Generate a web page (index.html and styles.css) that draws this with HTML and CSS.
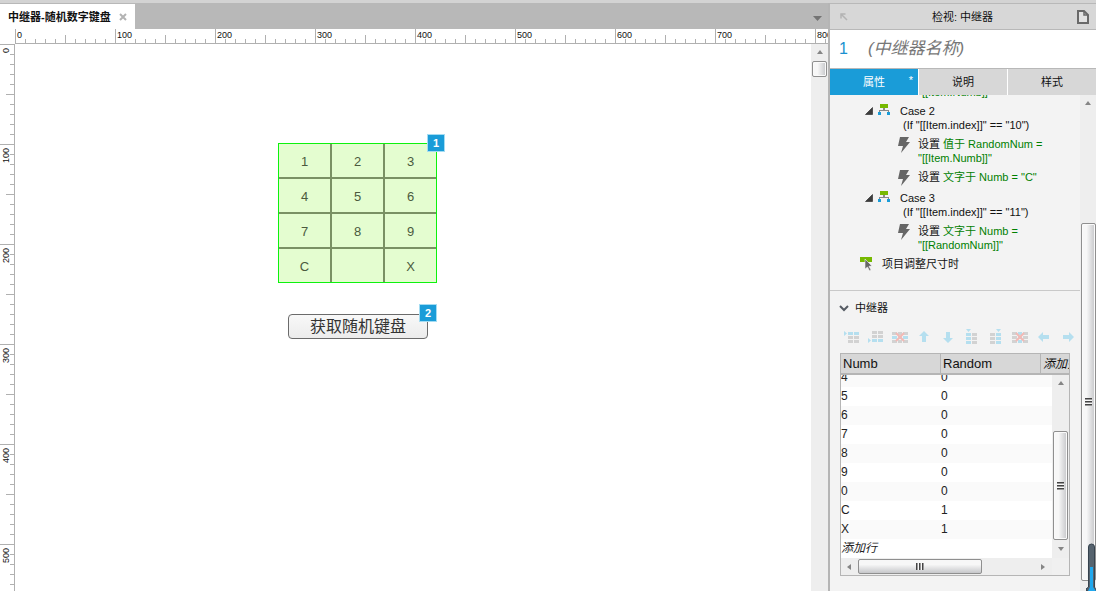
FILE: index.html
```html
<!DOCTYPE html>
<html lang="zh-CN">
<head>
<meta charset="utf-8">
<title>中继器-随机数字键盘</title>
<link rel="stylesheet" href="styles.css">
</head>
<body>
<svg class="defs" aria-hidden="true">
  <symbol id="case" viewBox="0 0 12 12"><path fill="#76b900" d="M2 0h8v4H2z"/><path fill="#8a8a8a" d="M5 4h2v2h4v2h-1V7H2v1H1V6h4z"/><path fill="#1a9cd8" d="M0 8h3v3H0zM9 8h3v3H9z"/></symbol>
  <symbol id="bolt" viewBox="0 0 12 16"><path fill="#666" d="M2 0h9L8 5h4L3 16l2-7H0z"/></symbol>
  <symbol id="open" viewBox="0 0 8 8"><path fill="#3c3c3c" stroke="#222" stroke-width=".6" d="M7.5.5v7h-7z"/></symbol>
  <symbol id="up" viewBox="0 0 6 4"><path fill="#858585" d="M3 0l3 4H0z"/></symbol>
  <symbol id="down" viewBox="0 0 6 4"><path fill="#858585" d="M0 0h6L3 4z"/></symbol>
  <symbol id="left" viewBox="0 0 4 6"><path fill="#858585" d="M4 0v6L0 3z"/></symbol>
  <symbol id="right" viewBox="0 0 4 6"><path fill="#858585" d="M0 0l4 3-4 3z"/></symbol>
  <symbol id="arrow" viewBox="0 0 16 16"><path fill="#b5dfef" d="M8 2l5 5h-3v6H6V7H3z"/></symbol>
</svg>
<div class="app">
  <main class="editor">
    <div class="tabbar">
      <div class="doc-tab"><span>中继器-随机数字键盘</span>
        <button class="plain" aria-label="关闭"><svg width="8" height="8" viewBox="0 0 8 8"><path d="M1 1l6 6M7 1L1 7" stroke="#b3b3b3" stroke-width="2"/></svg></button>
      </div>
      <button class="plain tab-menu" aria-label="页面列表"><svg width="9" height="5" viewBox="0 0 9 5"><path d="M0 0h9L4.500 5z" fill="#747474"/></svg></button>
    </div>
    <div class="ruler-x"><span>0</span><span>100</span><span>200</span><span>300</span><span>400</span><span>500</span><span>600</span><span>700</span><span>800</span></div>
    <div class="work">
      <div class="ruler-y"><div><span>0</span></div><div><span>100</span></div><div><span>200</span></div><div><span>300</span></div><div><span>400</span></div><div><span>500</span></div></div>
      <div class="canvas">
        <div class="keypad"><div>1</div><div>2</div><div>3</div><div>4</div><div>5</div><div>6</div><div>7</div><div>8</div><div>9</div><div>C</div><div></div><div>X</div><b class="badge">1</b></div>
        <div class="shuffle"><button>获取随机键盘</button><b class="badge">2</b></div>
      </div>
      <div class="scroll canvas-scroll"><svg width="6" height="4"><use href="#up"/></svg><i class="thumb"></i></div>
    </div>
  </main>
  <aside class="inspector">
    <header class="head">
      <svg width="8" height="8" viewBox="0 0 8 8"><path d="M1 5.500V1h4.500M1.500 1.500L7 7" fill="none" stroke="#b3b3b3" stroke-width="1.500"/></svg>
      <h1>检视: 中继器</h1>
      <svg width="12" height="14" viewBox="0 0 12 14"><path d="M1 1h6l4 4v8H1z" fill="#e2e2e2" stroke="#696969" stroke-width="2"/><path d="M7 1v4h4" fill="none" stroke="#696969" stroke-width="1.500"/></svg>
    </header>
    <div class="name"><label for="nm">1</label><input id="nm" placeholder="(中继器名称)"></div>
    <nav class="tabs"><button class="on">属性<sup>*</sup></button><button>说明</button><button>样式</button></nav>
    <div class="body">
      <div class="content">
        <section class="events">
          <p class="action clipped">"[[Item.Numb]]"</p>
          <div class="case"><svg class="tri" width="8" height="8"><use href="#open"/></svg><svg class="ci" width="12" height="12"><use href="#case"/></svg><p>Case 2<span>(If "[[Item.index]]" == "10")</span></p></div>
          <div class="action"><svg width="12" height="16"><use href="#bolt"/></svg><p><b>设置</b> 值于 RandomNum =<br>"[[Item.Numb]]"</p></div>
          <div class="action"><svg width="12" height="16"><use href="#bolt"/></svg><p><b>设置</b> 文字于 Numb = "C"</p></div>
          <div class="case"><svg class="tri" width="8" height="8"><use href="#open"/></svg><svg class="ci" width="12" height="12"><use href="#case"/></svg><p>Case 3<span>(If "[[Item.index]]" == "11")</span></p></div>
          <div class="action"><svg width="12" height="16"><use href="#bolt"/></svg><p><b>设置</b> 文字于 Numb =<br>"[[RandomNum]]"</p></div>
          <div class="event"><svg width="13" height="14" viewBox="0 0 13 14"><path fill="#76b900" d="M0 0h12v5H0z"/><path fill="#666" stroke="#f3f3f3" stroke-width=".6" d="M5 2l7 7-3 .3 2 3.700-1.500.8-2-3.800L5 12z"/></svg>项目调整尺寸时</div>
        </section>
        <section class="repeater">
          <h2><svg width="10" height="7" viewBox="0 0 10 7"><path d="M1 1l4 4 4-4" fill="none" stroke="#555b63" stroke-width="2"/></svg>中继器</h2>
          <div class="tools">
            <button aria-label="在上方添加行"><svg viewBox="0 0 16 16"><path fill="#b5dfef" d="M0 2l3 2.500L0 7zM4 3h5v3H4zM10 3h5v3h-5z"/><path fill="#d2d2d2" d="M4 7h5v3H4zM10 7h5v3h-5zM4 11h5v3H4zM10 11h5v3h-5z"/></svg></button>
            <button aria-label="在下方添加行"><svg viewBox="0 0 16 16"><path fill="#b5dfef" d="M0 9l3 2.500L0 14zM4 10h5v3H4zM10 10h5v3h-5z"/><path fill="#d2d2d2" d="M4 2h5v3H4zM10 2h5v3h-5zM4 6h5v3H4zM10 6h5v3h-5z"/></svg></button>
            <button aria-label="删除行"><svg viewBox="0 0 16 16"><path fill="#d2d2d2" d="M0 3h5v3H0zM6 3h4v3H6zM11 3h5v3h-5zM0 11h5v3H0zM6 11h4v3H6zM11 11h5v3h-5z"/><path fill="#b5dfef" d="M0 7h5v3H0zM6 7h4v3H6zM11 7h5v3h-5z"/><path d="M4 4l8 8M12 4l-8 8" stroke="#f2b9b5" stroke-width="2"/></svg></button>
            <button aria-label="上移"><svg viewBox="0 0 16 16"><use href="#arrow"/></svg></button>
            <button aria-label="下移"><svg viewBox="0 0 16 16"><use href="#arrow" transform="rotate(180 8 8)"/></svg></button>
            <button aria-label="在左侧添加列"><svg viewBox="0 0 16 16"><path fill="#b5dfef" d="M2 0h5L4.500 3zM2 4h5v3H2zM2 8h5v3H2zM2 12h5v3H2z"/><path fill="#d2d2d2" d="M8 4h5v3H8zM8 8h5v3H8zM8 12h5v3H8z"/></svg></button>
            <button aria-label="在右侧添加列"><svg viewBox="0 0 16 16"><path fill="#b5dfef" d="M8 0h5l-2.500 3zM8 4h5v3H8zM8 8h5v3H8zM8 12h5v3H8z"/><path fill="#d2d2d2" d="M2 4h5v3H2zM2 8h5v3H2zM2 12h5v3H2z"/></svg></button>
            <button aria-label="删除列"><svg viewBox="0 0 16 16"><path fill="#d2d2d2" d="M0 3h5v3H0zM11 3h5v3h-5zM0 7h5v3H0zM11 7h5v3h-5zM0 11h5v3H0zM11 11h5v3h-5z"/><path fill="#b5dfef" d="M6 3h4v3H6zM6 7h4v3H6zM6 11h4v3H6z"/><path d="M4 4l8 8M12 4l-8 8" stroke="#f2b9b5" stroke-width="2"/></svg></button>
            <button aria-label="左移"><svg viewBox="0 0 16 16"><use href="#arrow" transform="rotate(-90 8 8)"/></svg></button>
            <button aria-label="右移"><svg viewBox="0 0 16 16"><use href="#arrow" transform="rotate(90 8 8)"/></svg></button>
          </div>
          <div class="data">
            <table class="cols"><tr><th>Numb</th><th>Random</th><th><em>添加列</em></th></tr></table>
            <div class="rows">
              <table>
                <tr><td>4</td><td>0</td></tr><tr><td>5</td><td>0</td></tr><tr><td>6</td><td>0</td></tr><tr><td>7</td><td>0</td></tr><tr><td>8</td><td>0</td></tr><tr><td>9</td><td>0</td></tr><tr><td>0</td><td>0</td></tr><tr><td>C</td><td>1</td></tr><tr><td>X</td><td>1</td></tr><tr><td><em>添加行</em></td><td></td></tr>
              </table>
            </div>
            <div class="scroll row-scroll"><svg width="6" height="4"><use href="#up"/></svg><i class="thumb grip"></i><svg width="6" height="4"><use href="#down"/></svg></div>
            <div class="hscroll"><svg width="4" height="6"><use href="#left"/></svg><i class="hthumb"></i><svg width="4" height="6"><use href="#right"/></svg></div>
            <div class="corner"></div>
          </div>
        </section>
      </div>
      <div class="scroll body-scroll"><svg width="6" height="4"><use href="#up"/></svg><i class="thumb grip"></i></div>
    </div>
    <svg class="gauge" width="10" height="48" viewBox="0 0 10 48" aria-hidden="true"><path d="M2.500 44V4q0-3 3-3t3 3v40l1.500 3v1H0v-2z" fill="#56636e" stroke="#36434e"/><path d="M4 24h3v20l3 4H2l2-4z" fill="#20a8ee"/></svg>
  </aside>
</div>
</body>
</html>
```
FILE: styles.css
```css
* { box-sizing: border-box; }
body, p, h1, h2 { margin: 0; }
body { font: 11px/14px "Liberation Sans", "Noto Sans CJK SC", sans-serif; color: #111; background: #fff; }
button, input { font: inherit; color: inherit; border: 0; padding: 0; background: none; }
svg { display: block; flex: none; }
.defs { display: none; }
.app { height: 100vh; display: flex; border-top: 3px solid #d3d3d3; overflow: hidden; }
.editor { flex: 1; min-width: 0; display: flex; flex-direction: column; border-right: 2px solid #b5b5b5; }

.tabbar { height: 26px; flex: none; display: flex; justify-content: space-between; background: #b8b8b8; border-top: 1px solid #b8b8b8; }
.doc-tab { display: flex; align-items: center; gap: 8px; padding: 0 8px; background: #fff; font-weight: bold; }
.tab-menu { padding: 4px 6px 0; }

.ruler-x { height: 15px; flex: none; display: flex; margin-left: 15px; overflow: hidden; border-bottom: 1px solid #b0b0b0; }
.ruler-x span {
  flex: none; width: 100px; padding-left: 2px; font-size: 9px; line-height: 12px;
  background:
    linear-gradient(#b0b0b0, #b0b0b0) 0 0 / 1px 14px no-repeat,
    linear-gradient(#b0b0b0, #b0b0b0) 50px 6px / 1px 8px no-repeat,
    linear-gradient(90deg, #b0b0b0 1px, transparent 1px) 0 10px / 10px 4px repeat-x;
}
.work { flex: 1; min-height: 0; display: flex; }
.ruler-y { width: 15px; flex: none; overflow: hidden; border-right: 1px solid #b0b0b0; }
.ruler-y div {
  height: 100px; padding: 4px 0 0 1px;
  background:
    linear-gradient(#b0b0b0, #b0b0b0) 0 0 / 14px 1px no-repeat,
    linear-gradient(#b0b0b0, #b0b0b0) 6px 50px / 8px 1px no-repeat,
    linear-gradient(#b0b0b0 1px, transparent 1px) 10px 0 / 4px 10px repeat-y;
}
.ruler-y span { display: block; width: 10px; font-size: 9px; line-height: 10px; writing-mode: vertical-rl; transform: rotate(180deg); }

.canvas { flex: 1; min-width: 0; position: relative; overflow: hidden; }
.keypad {
  position: absolute; left: 263px; top: 99px; display: grid;
  grid-template-columns: repeat(3, 51px); grid-auto-rows: 33px; gap: 2px;
  border: 1px solid #0df20d; background: #7a9164;
}
.keypad div { display: grid; place-items: center; padding-top: 2px; background: #e4fdd0; color: #4b5a3e; font-size: 13px; }
.shuffle { position: absolute; left: 273px; top: 270px; }
.shuffle button {
  width: 140px; height: 25px; border: 1px solid #6b6b6b; border-radius: 4px;
  background: linear-gradient(#f8f8f8, #ececec); color: #333; font-size: 16px; line-height: 23px;
}
.badge {
  position: absolute; right: -9px; top: -10px; width: 18px; height: 18px;
  border: 1px solid #a4dcf2; background: #1a9cd8; color: #fff; line-height: 17px; text-align: center;
}

.scroll { display: flex; flex-direction: column; align-items: center; background: #eee; }
.thumb { width: 15px; border: 1px solid #8f8f8f; border-radius: 2px; background: linear-gradient(90deg, #f7f7f7 35%, #c6c7ca); box-shadow: inset 0 0 0 1px #fafafa; }
.grip { display: grid; place-items: center; }
.grip::after { content: ""; width: 7px; height: 8px; background: repeating-linear-gradient(#444 0 1px, #999 1px 2px, #f8f8f8 2px 3px); }
.canvas-scroll { width: 17px; padding-top: 6px; gap: 7px; }
.canvas-scroll .thumb { height: 16px; }

.inspector { width: 266px; flex: none; position: relative; display: flex; flex-direction: column; background: #f3f3f3; }
.head { height: 27px; flex: none; display: flex; align-items: center; justify-content: space-between; padding: 0 7px 0 10px; background: #d7d7d7; border-top: 1px solid #b8b8b8; border-bottom: 1px solid #b8b8b8; }
.head h1 { font-size: 11px; font-weight: normal; }
.name { height: 38px; flex: none; display: flex; align-items: center; gap: 20px; padding-left: 9px; background: #fff; color: #1a90d0; font-size: 16px; }
.name input { flex: 1; min-width: 0; height: 28px; font-size: 17px; font-style: italic; outline: 0; }
.name input::placeholder { color: #777; opacity: 1; }
.tabs { height: 27px; flex: none; display: flex; gap: 1px; border-top: 1px solid #b8b8b8; background: #fff; }
.tabs button { flex: 1; position: relative; background: #d7d7d7; }
.tabs .on { background: #1a9cd8; color: #fff; }
.tabs sup { position: absolute; right: 5px; top: 4px; font-size: 11px; line-height: 14px; }

.body { flex: 1; min-height: 0; display: flex; overflow: hidden; }
.content { flex: 1; min-width: 0; overflow: hidden; }
.body-scroll { width: 16px; padding-top: 6px; gap: 118px; }
.body-scroll .thumb { height: 358px; }

.events { margin-top: -10px; padding-bottom: 19px; border-bottom: 1px solid #c9c9c9; }
.case { display: flex; padding-left: 35px; margin-top: 5px; }
.tri { margin: 3px 5px 0 0; }
.ci { margin-right: 10px; }
.case span { display: block; padding-left: 3px; }
.action { display: flex; gap: 8px; padding-left: 68px; margin-top: 5px; color: #008000; }
.action b { font-weight: normal; color: #111; }
.action p { margin-right: -20px; white-space: nowrap; }
.clipped { padding-left: 88px; margin: 0; }
.event { display: flex; gap: 9px; padding-left: 30px; margin-top: 5px; }
.repeater { padding: 10px 10px 0; }
.repeater h2 { display: flex; align-items: center; gap: 6px; margin-left: -1px; font-size: 11px; font-weight: normal; }
.tools { display: flex; justify-content: space-between; padding-left: 4px; margin: 14px -6px 8px 0; }
.tools svg { width: 16px; height: 16px; }

.data { display: grid; grid-template-columns: minmax(0, 1fr) 17px; border: 1px solid #b5b5b5; background: #fff; }
.data table { border-spacing: 0; table-layout: fixed; }
.cols { grid-column: 1 / 3; width: 0; min-width: 100%; height: 21px; background: #d7d7d7; border-bottom: 2px solid #b5b5b5; overflow: hidden; }
.cols th { width: 100px; height: 19px; padding: 0 0 0 2px; overflow: hidden; white-space: nowrap; text-align: left; font-size: 13px; font-weight: normal; border-right: 1px solid #b5b5b5; }
.cols th:last-child { width: 28px; border-right: 0; }
.cols em { font-size: 12px; }
.rows { height: 183px; overflow: hidden; }
.rows table { width: 100%; margin-top: -7px; font-size: 12px; color: #222; }
.rows td { height: 19px; padding: 0; white-space: nowrap; line-height: 19px; }
.rows td:first-child { width: 100px; }
.rows tr:nth-child(odd) { background: #fafafa; }
.row-scroll { padding-top: 6px; }
.row-scroll .thumb { height: 109px; margin: 46px 0 7px; }
.hscroll { height: 17px; display: flex; align-items: center; gap: 7px; padding: 0 7px 0 6px; background: #eee; }
.hthumb { width: 124px; height: 15px; display: grid; place-items: center; border: 1px solid #8f8f8f; border-radius: 2px; background: linear-gradient(#f7f7f7 35%, #c6c7ca); }
.hthumb::after { content: ""; width: 8px; height: 7px; background: repeating-linear-gradient(90deg, #444 0 1px, #999 1px 2px, #f8f8f8 2px 3px); }
.hscroll svg:last-child { margin-left: auto; }
.corner { background: #f0f0f0; }
.gauge { position: absolute; right: 0; bottom: 0; }
```
